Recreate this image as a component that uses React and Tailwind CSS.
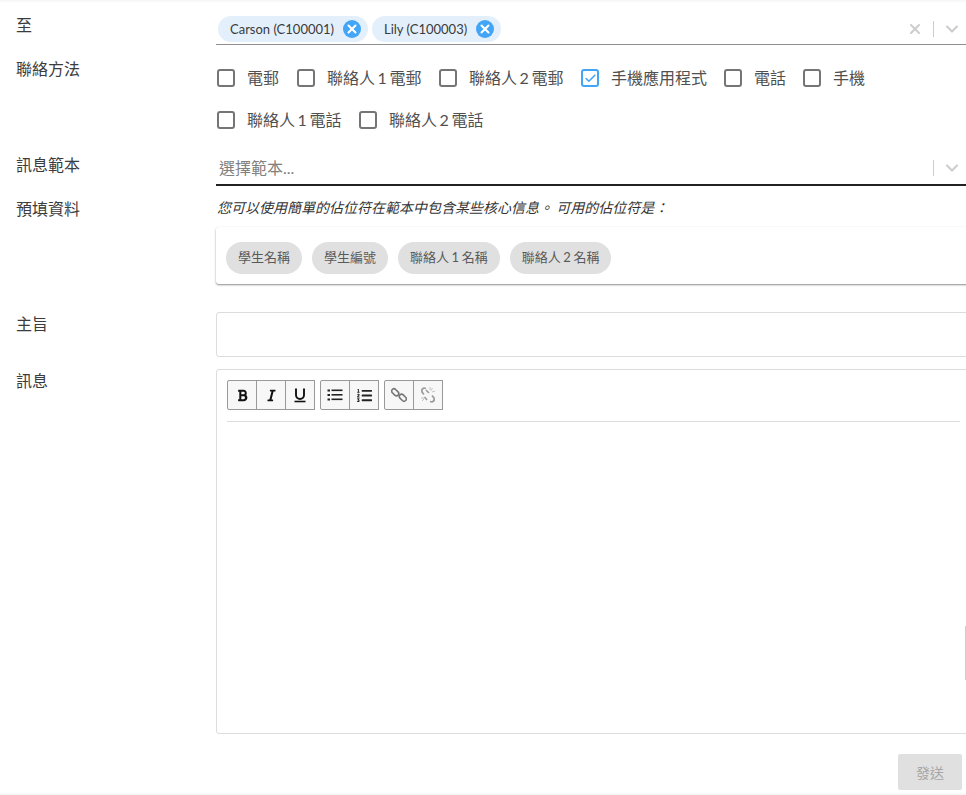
import React from "react";
import { ChevronDown, X, Check } from "lucide-react";
import { FaBold, FaItalic, FaListOl } from "react-icons/fa";

const FONT = "font-['Lato','Noto_Sans_CJK_TC',sans-serif]";

function Label({ children, className = "" }) {
  return <div className={`w-[216px] shrink-0 pl-4 text-[16px] leading-[20px] text-[#3c3c3c] ${className}`}>{children}</div>;
}

function Tag({ text, w }) {
  return (
    <div className={`flex h-[26px] items-center rounded-full bg-[#e3f0fc] pl-3 pr-[7px] text-[13px] text-[#3a3a3a] ${w}`}>
      <span className="whitespace-nowrap pt-[2px]">{text}</span>
      <span className="ml-auto flex h-[18px] w-[18px] items-center justify-center rounded-full bg-[#42a5f5]">
        <X size={14} strokeWidth={3.5} className="text-white" />
      </span>
    </div>
  );
}

function Box({ label, checked, className = "" }) {
  return (
    <div className={`flex items-center ${className}`}>
      <span className={`flex h-[18px] w-[18px] items-center justify-center rounded-[3px] border-2 ${checked ? "border-[#42a5f5]" : "border-[#757575]"}`}>
        {checked && <Check size={13} strokeWidth={3} className="text-[#42a5f5]" />}
      </span>
      <span className="ml-[12px] whitespace-nowrap text-[16px] text-[#505050] [word-spacing:-1.5px]">{label}</span>
    </div>
  );
}

function Chip({ children }) {
  return <div className="flex h-[32px] items-center rounded-full bg-[#e0e0e0] px-3 text-[13px] whitespace-nowrap text-[#5a5a5a] [word-spacing:-0.75px]">{children}</div>;
}

function Tool({ children, first, w = "w-[30px]" }) {
  return (
    <div className={`flex h-[30px] items-center justify-center border border-[#999] bg-[#f7f7f7] text-[#222] ${w} ${first ? "rounded-l-[2px]" : "-ml-px"}`}>
      {children}
    </div>
  );
}

function UnderlineIcon() {
  return (
    <svg width="14" height="16" viewBox="0 0 14 16" fill="none" stroke="#111">
      <path d="M3 1.5v6.5a4 4 0 0 0 8 0v-6.5" strokeWidth="1.9" />
      <path d="M1.5 14.5h11" strokeWidth="1.6" />
    </svg>
  );
}

function BulletIcon() {
  return (
    <svg width="16" height="14" viewBox="0 0 16 14" fill="#222">
      <rect x="0.5" y="1.5" width="2.5" height="2" />
      <rect x="0.5" y="6" width="2.5" height="2" />
      <rect x="0.5" y="10.5" width="2.5" height="2" />
      <rect x="4.5" y="1.5" width="11" height="1.6" />
      <rect x="4.5" y="6" width="11" height="1.6" />
      <rect x="4.5" y="10.5" width="11" height="1.6" />
    </svg>
  );
}

function LinkIcon() {
  return (
    <svg width="16" height="16" viewBox="0 0 16 16" fill="none" stroke="#777" strokeWidth="1.6">
      <rect x="0.2" y="3" width="8" height="4.6" rx="2.3" transform="rotate(45 4.2 5.3)" />
      <rect x="7.8" y="8.4" width="8" height="4.6" rx="2.3" transform="rotate(45 11.8 10.7)" />
    </svg>
  );
}

function UnlinkIcon() {
  return (
    <svg width="18" height="18" viewBox="0 0 18 18" fill="none" stroke="#9a9a9a" strokeWidth="1.6">
      <path d="M7 2.5 L5 2 Q2 3 3 6 L5 8.5" />
      <path d="M11 15.5 L13 16 Q16 15 15 12 L13 9.5" />
      <path d="M7 4 L10 7 M8 14 L5.5 11" />
      <path d="M11 1v3M13.5 2l-1.5 2.5M16 5l-3 1M2 12l3 0M3 15l2-2" strokeWidth="0.9" stroke="#bbb" />
    </svg>
  );
}

export default function App() {
  return (
    <div lang="zh-TW" className={`relative h-[795px] w-[966px] overflow-hidden bg-white ${FONT}`}>
      <div className="h-[3px] bg-gradient-to-b from-[#f5f5f5] to-white" />

      <div className="mt-[11px] flex">
        <Label className="pt-[1px]">至</Label>
        <div className="flex h-[31px] w-[750px] items-start border-b border-[#8f8f8f] pl-[2px] pt-[2px]">
          <div className="flex gap-[4px]">
            <Tag text="Carson (C100001)" w="w-[150px]" />
            <Tag text="Lily (C100003)" w="w-[129px]" />
          </div>
          <div className="ml-auto flex h-[26px] items-center">
            <X size={16} strokeWidth={3} className="mr-[10px] text-[#ccc]" />
            <div className="h-4 w-px bg-[#ccc]" />
            <ChevronDown size={20} strokeWidth={2.5} className="ml-[8px] mr-[4px] text-[#ccc]" />
          </div>
        </div>
      </div>

      <div className="mt-[14px] flex">
        <Label>聯絡方法</Label>
        <div className="flex w-[750px] flex-col gap-[18px] pl-[1px] pt-[7px]">
          <div className="flex h-[24px] items-center">
            <Box label="電郵" className="w-[80px]" />
            <Box label="聯絡人 1 電郵" className="w-[142px]" />
            <Box label="聯絡人 2 電郵" className="w-[142px]" />
            <Box label="手機應用程式" checked className="w-[143px]" />
            <Box label="電話" className="w-[79px]" />
            <Box label="手機" />
          </div>
          <div className="flex h-[24px] items-center">
            <Box label="聯絡人 1 電話" className="w-[142px]" />
            <Box label="聯絡人 2 電話" />
          </div>
        </div>
      </div>

      <div className="mt-[19px] flex">
        <Label className="pt-[4px]">訊息範本</Label>
        <div className="flex h-[35px] w-[750px] items-center border-b-2 border-[#222] pl-[3px]">
          <span className="text-[16px] text-[#808080]">選擇範本...</span>
          <div className="ml-auto flex items-center">
            <div className="h-4 w-px bg-[#ccc]" />
            <ChevronDown size={20} strokeWidth={2.5} className="ml-[8px] mr-[4px] text-[#ccc]" />
          </div>
        </div>
      </div>

      <div className="mt-[4px] flex">
        <Label className="pt-[9px]">預填資料</Label>
        <div className="w-[770px] shrink-0">
          <div className="flex h-[37px] items-center pb-[3px] pl-[1px] text-[14px] whitespace-nowrap text-[#333] italic">
            您可以使用簡單的佔位符在範本中包含某些核心信息。 可用的佔位符是：
          </div>
          <div className="flex h-[57px] items-center gap-[10px] rounded-[3px] bg-white pl-[10px] pt-[5px] shadow-[0_1px_2px_rgba(0,0,0,0.45)]">
            <Chip>學生名稱</Chip>
            <Chip>學生編號</Chip>
            <Chip>聯絡人 1 名稱</Chip>
            <Chip>聯絡人 2 名稱</Chip>
          </div>
        </div>
      </div>

      <div className="mt-[28px] flex">
        <Label className="pt-[2px]">主旨</Label>
        <div className="h-[45px] w-[770px] shrink-0 rounded-[3px] border border-[#dcdcdc]" />
      </div>

      <div className="mt-[12px] flex">
        <Label className="pt-[2px]">訊息</Label>
        <div className="h-[365px] w-[770px] shrink-0 rounded-[3px] border border-[#dcdcdc] pl-[10px] pt-[10px]">
          <div className="flex h-[42px] w-[733px] gap-[5px] border-b border-[#dcdcdc]">
            <div className="flex">
              <Tool first><FaBold size={13} className="text-[#111]" /></Tool>
              <Tool><FaItalic size={13} className="text-[#111]" /></Tool>
              <Tool><UnderlineIcon /></Tool>
            </div>
            <div className="flex">
              <Tool first><BulletIcon /></Tool>
              <Tool><FaListOl size={15} /></Tool>
            </div>
            <div className="flex">
              <Tool first><LinkIcon /></Tool>
              <Tool><UnlinkIcon /></Tool>
            </div>
          </div>
        </div>
      </div>

      <div className="mt-[20px] flex justify-end pr-[4px]">
        <div className="flex h-[36px] w-[64px] items-center justify-center rounded-[2px] bg-[#e0e0e0] text-[14px] text-[#a6a6a6]">發送</div>
      </div>

      <div className="absolute right-0 top-[626px] h-[54px] w-[1px] bg-[#f3c48d]" />
      <div className="absolute inset-x-0 bottom-0 h-[3px] bg-gradient-to-t from-[#f5f5f5] to-white" />
    </div>
  );
}
